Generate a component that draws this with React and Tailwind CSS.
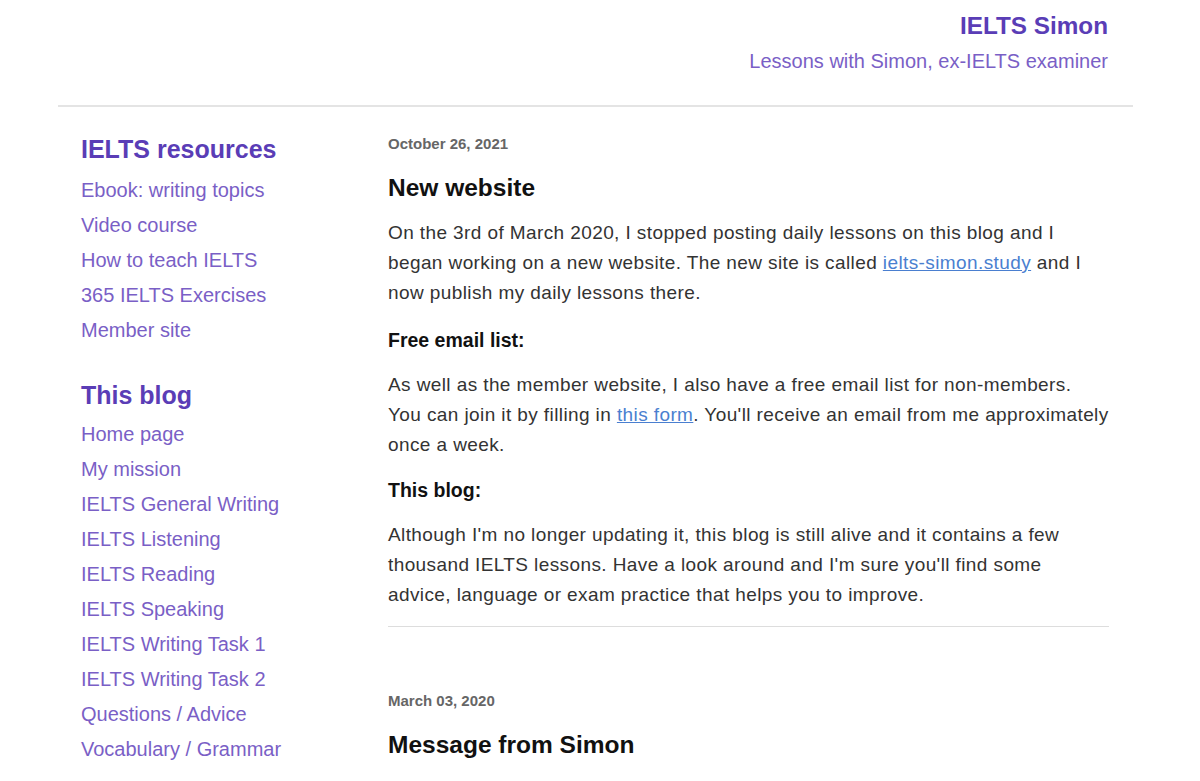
import React from 'react';

const resources = ['Ebook: writing topics', 'Video course', 'How to teach IELTS', '365 IELTS Exercises', 'Member site'];

const blogLinks = [
  'Home page',
  'My mission',
  'IELTS General Writing',
  'IELTS Listening',
  'IELTS Reading',
  'IELTS Speaking',
  'IELTS Writing Task 1',
  'IELTS Writing Task 2',
  'Questions / Advice',
  'Vocabulary / Grammar',
];

const SideSection = ({ title, links, className, listClass }) => (
  <div className={className}>
    <h2 className="text-[25px] leading-[30px] font-bold text-[#5a3db6]">{title}</h2>
    <ul className={listClass}>
      {links.map((l) => (
        <li key={l} className="text-[20px] leading-[35px]">
          <a href="#" className="text-[#7a5fc6]">{l}</a>
        </li>
      ))}
    </ul>
  </div>
);

const App = () => {
  return (
    <div className="min-h-[781px] bg-white font-['Liberation_Sans',Arial,sans-serif] overflow-hidden">
      <div className="ml-[58px] w-[1075px]">
        <header className="pt-[11px] pr-[25px] text-right">
          <h1 className="text-[24.3px] leading-[30px] font-bold text-[#5a3db6]">IELTS Simon</h1>
          <p className="mt-[8px] text-[20px] leading-[24px] text-[#7a5fc6]">Lessons with Simon, ex-IELTS examiner</p>
        </header>
        <div className="mt-[32px] border-t-2 border-[#e4e4e4]"></div>

        <div className="flex pl-[23px] pr-[24px] pt-[27px]">
          <aside className="w-[307px] shrink-0">
            <SideSection title="IELTS resources" links={resources} listClass="mt-[9px]" />
            <SideSection title="This blog" links={blogLinks} className="mt-[32px]" listClass="mt-[7px]" />
          </aside>

          <main className="w-[721px] text-[#333]">
            <article>
              <div className="text-[15px] leading-[20px] font-bold text-[#666]">October 26, 2021</div>
              <h3 className="mt-[19px] text-[24.5px] leading-[30px] font-bold text-[#111]">New website</h3>
              <div className="mt-[15px] text-[19px] leading-[30px] tracking-[0.4px] whitespace-nowrap">
                <p>
                  On the 3rd of March 2020, I stopped posting daily lessons on this blog and I<br />
                  began working on a new website. The new site is called{' '}
                  <a href="#" className="text-[#4a7fd0] underline">ielts-simon.study</a> and I<br />
                  now publish my daily lessons there.
                </p>
                <p className="mt-[17px] text-[19.5px] font-bold text-[#111] tracking-normal">Free email list:</p>
                <p className="mt-[15px]">
                  As well as the member website, I also have a free email list for non-members.<br />
                  You can join it by filling in{' '}
                  <a href="#" className="text-[#4a7fd0] underline">this form</a>. You'll receive an email from me approximately<br />
                  once a week.
                </p>
                <p className="mt-[15px] text-[19.5px] font-bold text-[#111] tracking-normal">This blog:</p>
                <p className="mt-[15px]">
                  Although I'm no longer updating it, this blog is still alive and it contains a few<br />
                  thousand IELTS lessons. Have a look around and I'm sure you'll find some<br />
                  advice, language or exam practice that helps you to improve.
                </p>
              </div>
              <div className="mt-[16px] border-t border-[#ddd]"></div>
            </article>

            <article className="mt-[64px]">
              <div className="text-[15px] leading-[20px] font-bold text-[#666]">March 03, 2020</div>
              <h3 className="mt-[19px] text-[24.5px] leading-[30px] font-bold text-[#111]">Message from Simon</h3>
            </article>
          </main>
        </div>
      </div>
    </div>
  );
};

export default App;
